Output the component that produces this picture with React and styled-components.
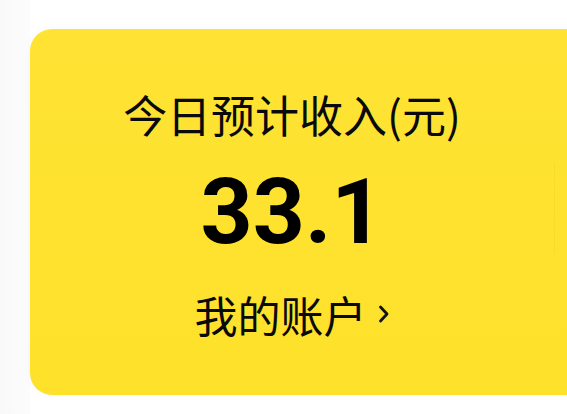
import React from 'react';
import styled, { createGlobalStyle } from 'styled-components';

const GlobalStyle = createGlobalStyle`
    html, body {
        margin: 0;
        padding: 0;
        background: #ffffff;
    }
    body {
        width: 567px;
        height: 414px;
        overflow: hidden;
        font-family: "Noto Sans CJK SC", "Noto Sans", sans-serif;
    }
`;

const Page = styled.div`
    width: 567px;
    height: 414px;
    padding: 29px 0 0 30px;
    box-sizing: border-box;
    background: linear-gradient(90deg, #f9f9f9 0, #fcfcfc 30px, #ffffff 30px);
    overflow: hidden;
`;

const Card = styled.section`
    width: 620px;
    height: 366px;
    border-radius: 22px;
    background: linear-gradient(180deg, #ffe334 0%, #fee12a 100%);
    box-shadow: 0 0 10px rgba(0, 0, 0, 0.03);
    display: flex;
    align-items: flex-start;
`;

const Column = styled.div`
    width: 524px;
    padding-top: 59px;
    display: flex;
    flex-direction: column;
    align-items: center;
`;

const Divider = styled.div`
    width: 1px;
    height: 92px;
    margin-top: 133px;
    background: rgba(160, 130, 0, 0.07);
`;

const Title = styled.h2`
    margin: 0;
    font-size: 44px;
    line-height: 52px;
    font-weight: 400;
    color: #0a0a0a;
    white-space: nowrap;
`;

const Amount = styled.div`
    margin-top: 22px;
    font-family: Roboto, "Liberation Sans", sans-serif;
    font-size: 91px;
    line-height: 100px;
    font-weight: 700;
    color: #000;
`;

const Link = styled.a`
    margin-top: 27px;
    display: flex;
    align-items: center;
    gap: 11px;
    font-size: 43px;
    line-height: 50px;
    font-weight: 400;
    color: #0a0a0a;
    text-decoration: none;
`;

const Chevron = () => (
    <svg width="12" height="20" viewBox="0 0 12 20">
        <path d="M2.5 3 L9 10 L2.5 17" fill="none" stroke="#111" strokeWidth="2.8" strokeLinecap="round" strokeLinejoin="round" />
    </svg>
);

const App = () => {
    return (
        <Page>
            <GlobalStyle />
            <Card>
                <Column>
                    <Title>今日预计收入(元)</Title>
                    <Amount>33.1</Amount>
                    <Link>
                        我的账户
                        <Chevron />
                    </Link>
                </Column>
                <Divider />
            </Card>
        </Page>
    );
};

export default App;
